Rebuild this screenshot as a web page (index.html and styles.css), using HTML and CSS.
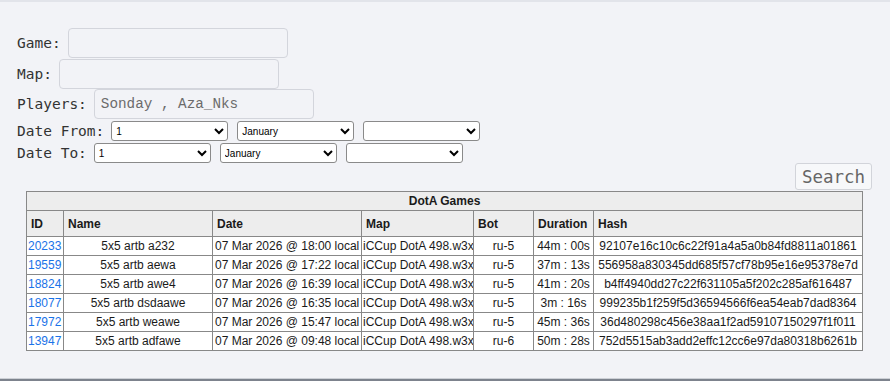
FILE: index.html
```html
<!DOCTYPE html>
<html>
<head>
<meta charset="utf-8">
<link rel="stylesheet" href="styles.css">
</head>
<body>
<div class="page">
  <form class="filters">
    <div class="row row-text r-game">
      <label class="lbl">Game:</label>
      <input class="txt" type="text">
    </div>
    <div class="row row-text r-map">
      <label class="lbl">Map:</label>
      <input class="txt" type="text">
    </div>
    <div class="row row-text r-players">
      <label class="lbl">Players:</label>
      <input class="txt" type="text" value="Sonday , Aza_Nks">
    </div>
    <div class="row row-date r-from">
      <label class="lbl">Date From:</label>
      <select class="sel"><option>1</option></select>
      <select class="sel"><option>January</option></select>
      <select class="sel"><option></option></select>
    </div>
    <div class="row row-date r-to">
      <label class="lbl">Date To:</label>
      <select class="sel"><option>1</option></select>
      <select class="sel"><option>January</option></select>
      <select class="sel"><option></option></select>
    </div>
    <div class="actions">
      <button type="button" class="search">Search</button>
    </div>
  </form>

  <table class="games">
    <colgroup>
      <col class="c-id"><col class="c-name"><col class="c-date"><col class="c-map"><col class="c-bot"><col class="c-dur"><col class="c-hash">
    </colgroup>
    <tr class="cap"><th colspan="7">DotA Games</th></tr>
    <tr class="head"><th>ID</th><th>Name</th><th>Date</th><th>Map</th><th>Bot</th><th>Duration</th><th>Hash</th></tr>
    <tr><td class="id"><a href="#">20233</a></td><td class="ctr">5x5 artb a232</td><td>07 Mar 2026 @ 18:00 local</td><td class="map">iCCup DotA 498.w3x</td><td class="ctr">ru-5</td><td class="ctr">44m : 00s</td><td class="ctr">92107e16c10c6c22f91a4a5a0b84fd8811a01861</td></tr>
    <tr><td class="id"><a href="#">19559</a></td><td class="ctr">5x5 artb aewa</td><td>07 Mar 2026 @ 17:22 local</td><td class="map">iCCup DotA 498.w3x</td><td class="ctr">ru-5</td><td class="ctr">37m : 13s</td><td class="ctr">556958a830345dd685f57cf78b95e16e95378e7d</td></tr>
    <tr><td class="id"><a href="#">18824</a></td><td class="ctr">5x5 artb awe4</td><td>07 Mar 2026 @ 16:39 local</td><td class="map">iCCup DotA 498.w3x</td><td class="ctr">ru-5</td><td class="ctr">41m : 20s</td><td class="ctr">b4ff4940dd27c22f631105a5f202c285af616487</td></tr>
    <tr><td class="id"><a href="#">18077</a></td><td class="ctr">5x5 artb dsdaawe</td><td>07 Mar 2026 @ 16:35 local</td><td class="map">iCCup DotA 498.w3x</td><td class="ctr">ru-5</td><td class="ctr">3m : 16s</td><td class="ctr">999235b1f259f5d36594566f6ea54eab7dad8364</td></tr>
    <tr><td class="id"><a href="#">17972</a></td><td class="ctr">5x5 artb weawe</td><td>07 Mar 2026 @ 15:47 local</td><td class="map">iCCup DotA 498.w3x</td><td class="ctr">ru-5</td><td class="ctr">45m : 36s</td><td class="ctr">36d480298c456e38aa1f2ad59107150297f1f011</td></tr>
    <tr><td class="id"><a href="#">13947</a></td><td class="ctr">5x5 artb adfawe</td><td>07 Mar 2026 @ 09:48 local</td><td class="map">iCCup DotA 498.w3x</td><td class="ctr">ru-6</td><td class="ctr">50m : 28s</td><td class="ctr">752d5515ab3add2effc12cc6e97da80318b6261b</td></tr>
  </table>
  <div class="spacer"></div>
  <div class="bottom"></div>
</div>
</body>
</html>
```

FILE: styles.css
```css
html, body {
  margin: 0;
  padding: 0;
}
body {
  background: #f2f3f7;
  font-family: "DejaVu Sans Mono", monospace;
  color: #333;
}
.page {
  height: 381px;
  box-sizing: border-box;
  border-top: 2px solid #e2e4ea;
  display: flex;
  flex-direction: column;
}
.filters {
  margin: 0;
  padding: 26px 18px 0 17px;
}
.row {
  display: flex;
  align-items: center;
  gap: 7px;
}
.lbl {
  font-size: 14.5px;
  color: #333;
  white-space: nowrap;
}
.row-text {
  height: 30px;
}
.r-game { margin-bottom: 1px; }
.r-players { margin-bottom: 2px; }
.txt {
  box-sizing: border-box;
  width: 220px;
  height: 30px;
  margin: 0;
  border: 1px solid #d3d5dc;
  border-radius: 4px;
  background: #f2f3f7;
  padding: 2px 6px;
  font-family: "Liberation Mono", "DejaVu Sans Mono", monospace;
  font-size: 14.3px;
  line-height: 24px;
  color: #6b6b6b;
  outline: none;
}
.row-date {
  height: 20px;
  gap: 0;
}
.row-date .lbl { margin-right: 7px; }
.r-from { margin-bottom: 2px; }
.sel {
  box-sizing: border-box;
  width: 117px;
  height: 20px;
  margin: 0 9px 0 0;
  font-family: "Liberation Sans", Arial, sans-serif;
  font-size: 10px;
  color: #000;
  background: #fff;
  border: 1px solid #8a8a8a;
  border-radius: 3px;
}
.actions {
  display: flex;
  justify-content: flex-end;
}
.search {
  box-sizing: border-box;
  width: 77px;
  height: 27px;
  margin: 0;
  padding: 0;
  font-family: "DejaVu Sans Mono", monospace;
  font-size: 17.5px;
  color: #666;
  background: #f7f8fa;
  border: 1px solid #d2d4da;
  border-radius: 3px;
}
.games {
  margin: 1px 0 0 26px;
  width: 837px;
  table-layout: fixed;
  border-collapse: collapse;
  font-family: "Liberation Sans", Arial, sans-serif;
  font-size: 12px;
  color: #1a1a1a;
  background: #fff;
}
.c-id { width: 37px; }
.c-name { width: 149px; }
.c-date { width: 149px; }
.c-map { width: 112px; }
.c-bot { width: 60px; }
.c-dur { width: 60px; }
.c-hash { width: 269px; }
.games th, .games td {
  border: 1px solid #888;
  white-space: nowrap;
  overflow: hidden;
}
.games th {
  background: #ededed;
  font-weight: bold;
  text-align: left;
  padding: 0 4px;
}
.cap th {
  text-align: center;
  height: 18px;
  padding: 0;
}
.head th {
  height: 25px;
}
.games td {
  height: 18px;
  padding: 0 2px;
  text-align: left;
}
.games td.ctr { text-align: center; }
.games td.map { padding: 0 0 0 1px; text-overflow: clip; }
.games td.id { padding: 0 1px; }
.games a {
  color: #1a73e8;
  text-decoration: none;
}
.spacer { flex: 1; }
.bottom {
  height: 2px;
  border-top: 1px solid #cdd0d6;
  background: #7d838d;
}
```
